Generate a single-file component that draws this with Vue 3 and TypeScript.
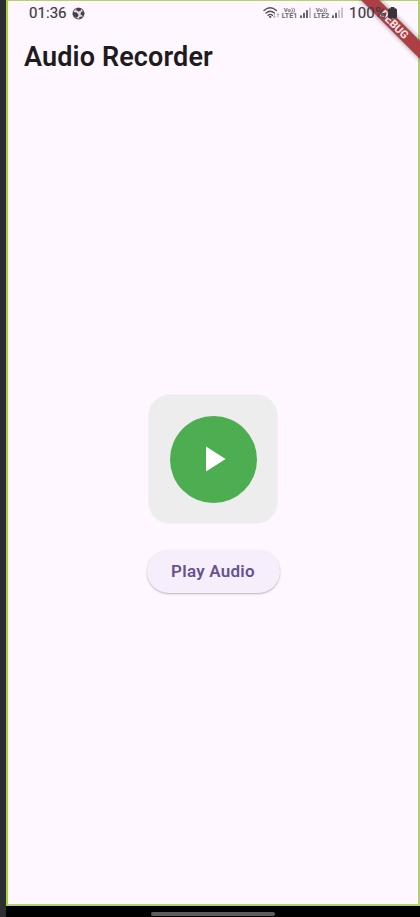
<script setup lang="ts">
import { ref } from 'vue'

const title = 'Audio Recorder'
const clock = '01:36'
const battery = '100%'
const sims = [{ name: 'LTE1', strength: 3 }, { name: 'LTE2', strength: 2 }]
const playing = ref(false)
</script>

<template>
  <div class="window">
    <div class="screen">
      <header class="status">
        <span class="clock">{{ clock }}</span>
        <svg class="ball" width="13" height="13" viewBox="0 0 13 13">
          <circle cx="6.5" cy="6.5" r="5.5" fill="#e2dbe3" stroke="#66606a" stroke-width="1.1" />
          <path d="M4.6 1 8.7 1 9 3.4 6.6 4.6 4.2 3.2ZM9 5 11.6 4 12.3 7 10.8 9 8.5 7.5ZM1 5 4.8 5.4 6.7 8.3 5 10.7 2.4 9.8 .8 7.5ZM7.3 10.1 9.6 9.4 10 11 7.5 12.2Z" fill="#454048" />
        </svg>
        <div class="indicators">
          <svg class="wifi" width="18" height="14" viewBox="0 0 18 14">
            <g fill="none" stroke="#514c54" stroke-width="1.4" stroke-linecap="round">
              <path d="M1 4.5Q7.2-.8 13.4 4.5M3 7Q7.2 3.5 11.4 7M5 9.3Q7.2 7.5 9.4 9.3" />
            </g>
            <circle cx="7.2" cy="10.9" r="1.1" fill="#514c54" />
            <path d="M11.3 7.7V11.5M10.1 10.3 11.3 11.6 12.5 10.3M15 11.5V7.8M13.8 9 15 7.7 16.2 9" fill="none" stroke="#aaa4ad" stroke-width=".9" />
          </svg>
          <div v-for="sim in sims" :key="sim.name" class="sim">
            <div class="network"><span class="volte">Vo))</span><span>{{ sim.name }}</span></div>
            <svg width="12" height="12" viewBox="0 0 12 12">
              <rect v-for="n in 4" :key="n" :x="(n - 1) * 3" :y="11 - n * 2.6" width="2" :height="n * 2.6" :fill="n <= sim.strength ? '#69636b' : '#c9c3ca'" />
            </svg>
          </div>
          <span class="battery">{{ battery }}</span>
          <svg class="cell" width="9" height="12" viewBox="0 0 9 12"><path d="M2.7 0H6.3V1.2H7.2Q9 1.2 9 3V10Q9 11.5 7.4 11.5H1.6Q0 11.5 0 10V3Q0 1.2 1.8 1.2H2.7Z" fill="#39343c" /></svg>
        </div>
      </header>
      <h1>{{ title }}</h1>
      <main>
        <div class="card">
          <div class="disc">
            <svg width="20" height="26" viewBox="0 0 20 26"><path d="M0 .5V25.5L19.6 13Z" fill="#fff" /></svg>
          </div>
        </div>
        <button type="button" @click="playing = !playing">Play Audio</button>
      </main>
      <svg class="ribbon" width="70" height="70" viewBox="0 0 70 70">
        <defs><filter id="soft" x="-20%" y="-20%" width="140%" height="140%"><feGaussianBlur stdDeviation="2.8" /></filter></defs>
        <path d="M9-2H27L72 43V61Z" fill="#000" opacity=".45" filter="url(#soft)" />
        <path d="M9-2H27L72 43V61Z" fill="#ad3f44" />
        <text transform="translate(44.4 24.4) rotate(45)" text-anchor="middle" y="3.9">DEBUG</text>
      </svg>
    </div>
    <footer><span class="handle"></span></footer>
  </div>
</template>

<style>
body { overflow: hidden; }
</style>
<style scoped>
.window {
  box-sizing: border-box;
  width: 420px;
  height: 917px;
  padding-left: 6px;
  background: #2e2f33;
  font-family: Roboto, sans-serif;
}
.screen {
  position: relative;
  box-sizing: border-box;
  height: 906px;
  border: 2px solid #b4d267;
  border-left-color: #a6d52d;
  border-top-width: 1px;
  background: #fef7ff;
  display: flex;
  flex-direction: column;
}
.status {
  position: relative;
  z-index: 1;
  height: 24px;
  display: flex;
  align-items: center;
  padding-left: 21px;
  color: #403b43;
}
.clock { width: 38px; font-size: 15px; line-height: 24px; letter-spacing: .05px; -webkit-text-stroke: .2px #403b43; }
.ball { margin-left: 5px; }
.indicators { display: flex; align-items: center; margin-left: 178px; }
.wifi { width: 18px; flex: none; }
.sim { display: flex; align-items: center; width: 32px; }
.network {
  display: flex;
  flex-direction: column;
  align-items: center;
  width: 17px;
  margin-right: 2px;
  font-size: 7px;
  line-height: 7px;
  font-weight: 700;
  color: #6b656e;
}
.network .volte { font-size: 6px; line-height: 6px; }
.battery { width: 37px; margin-left: 4px; font-size: 15px; line-height: 24px; letter-spacing: .2px; -webkit-text-stroke: .2px #403b43; }
.cell { margin-left: 2px; flex: none; }
h1 {
  margin: 15px 0 0 16px;
  font-size: 27px;
  line-height: 34px;
  font-weight: 600;
  letter-spacing: .13px;
  color: #1d1b20;
}
main { display: flex; flex-direction: column; align-items: center; margin-top: 320px; }
.card {
  box-sizing: border-box;
  width: 130px;
  height: 130px;
  border-radius: 22px;
  background: #ededee;
  border: 1px solid #f4f0f5;
  display: grid;
  place-items: center;
}
.disc {
  width: 87px;
  height: 87px;
  border-radius: 50%;
  background: #4cae50;
  display: grid;
  place-items: center;
}
.disc svg { margin-left: 5px; }
button {
  width: 133px;
  height: 43px;
  margin-top: 26px;
  padding: 0;
  border: 0;
  border-radius: 22px;
  background: #f6effb;
  box-shadow: 0 1px 2px rgb(0 0 0 / 28%);
  font: 600 17px/43px Roboto, sans-serif;
  letter-spacing: .25px;
  color: #67528f;
}
.ribbon { position: absolute; right: -2px; top: -1px; }
.ribbon text { font: 700 11px Roboto, sans-serif; fill: #f8e9ea; }
footer { height: 11px; background: #000; display: flex; justify-content: center; }
.handle { width: 124px; height: 4px; margin-top: 6px; border-radius: 2px; background: #5d5d5d; }
</style>
